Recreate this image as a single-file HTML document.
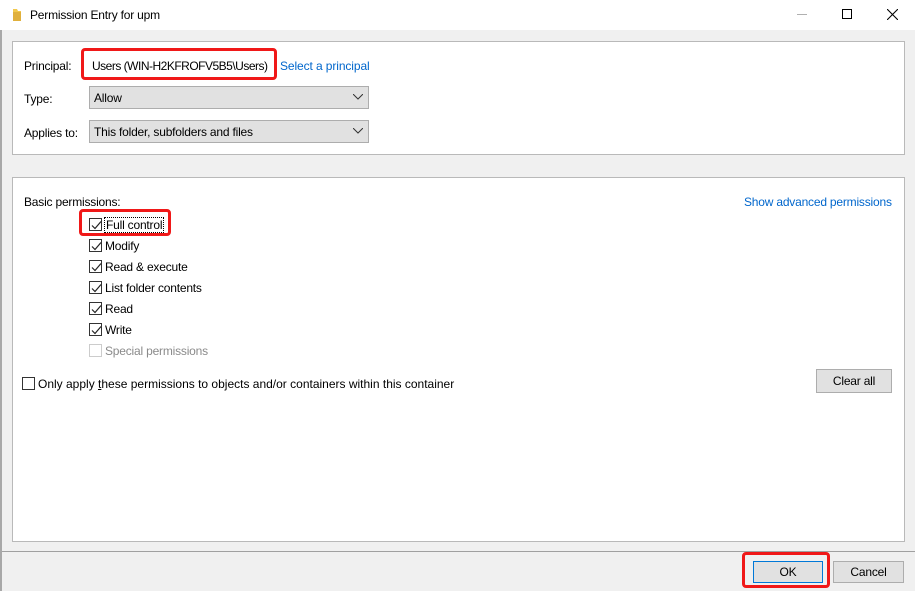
<!DOCTYPE html>
<html><head><style>
*{margin:0;padding:0;box-sizing:border-box}
body{width:915px;height:591px;background:#f0f0f0;font-family:"Liberation Sans",sans-serif;font-size:12px;letter-spacing:-0.2px;color:#000;position:relative;overflow:hidden}
.a{position:absolute;white-space:nowrap}
.panel{position:absolute;background:#fff;border:1px solid #b9b9b9}
.sel{position:absolute;background:#e1e1e1;border:1px solid #adadad;height:23px;padding:4px 4px;line-height:15px}
.sel svg{position:absolute;right:5px;top:7px}
.cb{position:absolute;width:13px;height:13px;border:1px solid #333;background:#fff}
.cb svg{position:absolute;left:1px;top:1px}
.btn{position:absolute;background:#e1e1e1;border:1px solid #adadad;text-align:center;line-height:20px}
.red{position:absolute;border:3px solid #f01818;border-radius:4px}
</style></head><body>
<div class="a" style="left:0;top:0;width:915px;height:30px;background:#fff"></div>
<div class="a" style="left:0;top:30px;width:2px;height:561px;background:#a8a8a8"></div>
<svg class="a" style="left:12px;top:8px" width="10" height="14"><path d="M1 1h4l1 2h3v10H1z" fill="#f2c94c"/><path d="M1 4h8v9H1z" fill="#e0b03c"/></svg>
<div class="a" style="left:30px;top:8px">Permission Entry for upm</div>
<div class="a" style="left:797px;top:14px;width:10px;height:1px;background:#b0b0b0"></div>
<div class="a" style="left:842px;top:9px;width:10px;height:10px;border:1px solid #000"></div>
<svg class="a" style="left:887px;top:9px" width="11" height="11"><path d="M0 0L11 11M11 0L0 11" stroke="#000" stroke-width="1.1"/></svg>

<div class="panel" style="left:12px;top:41px;width:893px;height:114px"></div>
<div class="a" style="left:24px;top:59px">Principal:</div>
<div class="a" style="left:92px;top:59px;letter-spacing:-0.5px">Users (WIN-H2KFROFV5B5\Users)</div>
<div class="a" style="left:280px;top:59px;color:#0066cc;letter-spacing:-0.1px">Select a principal</div>
<div class="red" style="left:81px;top:48px;width:196px;height:32px"></div>
<div class="a" style="left:24px;top:92px">Type:</div>
<div class="sel" style="left:89px;top:86px;width:280px">Allow<svg width="10" height="6"><path d="M0 0L5 5L10 0" stroke="#333" fill="none"/></svg></div>
<div class="a" style="left:24px;top:126px">Applies to:</div>
<div class="sel" style="left:89px;top:120px;width:280px">This folder, subfolders and files<svg width="10" height="6"><path d="M0 0L5 5L10 0" stroke="#333" fill="none"/></svg></div>

<div class="panel" style="left:12px;top:177px;width:893px;height:365px"></div>
<div class="a" style="left:24px;top:195px">Basic permissions:</div>
<div class="a" style="left:744px;top:195px;color:#0066cc">Show advanced permissions</div>

<div class="cb" style="left:89px;top:218px"><svg width="11" height="11"><path d="M1 5.5L4 8.5L10 1.5" stroke="#222" fill="none" stroke-width="1.2"/></svg></div>
<div class="a" style="left:104px;top:217px;border:1px dotted #000;padding:0 1px">Full control</div>
<div class="red" style="left:79px;top:209px;width:92px;height:27px"></div>
<div class="cb" style="left:89px;top:239px"><svg width="11" height="11"><path d="M1 5.5L4 8.5L10 1.5" stroke="#222" fill="none" stroke-width="1.2"/></svg></div>
<div class="a" style="left:105px;top:239px">Modify</div>
<div class="cb" style="left:89px;top:260px"><svg width="11" height="11"><path d="M1 5.5L4 8.5L10 1.5" stroke="#222" fill="none" stroke-width="1.2"/></svg></div>
<div class="a" style="left:105px;top:260px">Read &amp; execute</div>
<div class="cb" style="left:89px;top:281px"><svg width="11" height="11"><path d="M1 5.5L4 8.5L10 1.5" stroke="#222" fill="none" stroke-width="1.2"/></svg></div>
<div class="a" style="left:105px;top:281px">List folder contents</div>
<div class="cb" style="left:89px;top:302px"><svg width="11" height="11"><path d="M1 5.5L4 8.5L10 1.5" stroke="#222" fill="none" stroke-width="1.2"/></svg></div>
<div class="a" style="left:105px;top:302px">Read</div>
<div class="cb" style="left:89px;top:323px"><svg width="11" height="11"><path d="M1 5.5L4 8.5L10 1.5" stroke="#222" fill="none" stroke-width="1.2"/></svg></div>
<div class="a" style="left:105px;top:323px">Write</div>
<div class="cb" style="left:89px;top:344px;border-color:#ccc"></div>
<div class="a" style="left:105px;top:344px;color:#8a8a8a">Special permissions</div>

<div class="cb" style="left:22px;top:377px"></div>
<div class="a" style="left:38px;top:377px;letter-spacing:0">Only apply <u>t</u>hese permissions to objects and/or containers within this container</div>
<div class="btn" style="left:816px;top:369px;width:76px;height:24px;line-height:22px">Clear all</div>

<div class="a" style="left:2px;top:551px;width:913px;height:1px;background:#a0a0a0"></div>
<div class="btn" style="left:753px;top:561px;width:70px;height:22px;border:1px solid #0078d7">OK</div>
<div class="red" style="left:742px;top:552px;width:88px;height:36px"></div>
<div class="btn" style="left:833px;top:561px;width:71px;height:22px">Cancel</div>
</body></html>
